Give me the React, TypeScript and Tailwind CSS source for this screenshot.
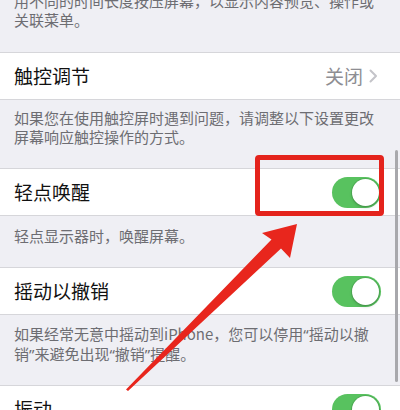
import React from "react";

const font = { fontFamily: '"Noto Sans CJK SC", "Noto Sans", sans-serif' };

// western quotes, narrow like in the screenshot
function Q({ c }: { c: string }) {
  return <span style={{ fontFamily: '"Noto Sans", sans-serif' }}>{c}</span>;
}

function Footer({ lines, className = "" }: { lines: React.ReactNode[]; className?: string }) {
  return (
    <div className={`pl-[14px] pr-[20px] text-[15px] leading-[19px] text-[#6d6d72] ${className}`}>
      {lines.map((l, i) => (
        <div key={i} className="whitespace-nowrap">
          {l}
        </div>
      ))}
    </div>
  );
}

function Toggle() {
  return (
    <div className="flex h-[31px] w-[49px] items-center justify-end rounded-full bg-[#58c25f] p-[2px]">
      <div className="h-[27px] w-[27px] rounded-full bg-white shadow-[0_0_0_1px_rgba(0,0,0,0.1),0_2px_3px_rgba(0,0,0,0.15)]" />
    </div>
  );
}

function Row({ title, children }: { title: string; children?: React.ReactNode }) {
  return (
    <div className="flex h-[48px] items-center justify-between border-y border-[#d6d6da] bg-white pl-[14px] pr-[19px]">
      <span className="text-[19px] text-[#111]">{title}</span>
      {children}
    </div>
  );
}

export default function App() {
  return (
    <div className="relative h-[410px] w-[400px] overflow-hidden bg-[#efeff4]" style={font}>
      <Footer
        className="mt-[-9px] pb-[23px]"
        lines={["用不同的时间长度按压屏幕，以显示内容预览、操作或", "关联菜单。"]}
      />
      <Row title="触控调节">
        <div className="flex items-center gap-[6px]">
          <span className="text-[19px] text-[#8e8e93]">关闭</span>
          <svg width="9" height="14" viewBox="0 0 9 14" className="mr-[3px]">
            <path d="M1.5 1.5 L7 7 L1.5 12.5" fill="none" stroke="#c4c4c9" strokeWidth="2" strokeLinecap="round" strokeLinejoin="round" />
          </svg>
        </div>
      </Row>
      <Footer
        className="pt-[8px] pb-[22px]"
        lines={["如果您在使用触控屏时遇到问题，请调整以下设置更改", "屏幕响应触控操作的方式。"]}
      />
      <Row title="轻点唤醒">
        <Toggle />
      </Row>
      <Footer className="pt-[10px] pb-[22px]" lines={["轻点显示器时，唤醒屏幕。"]} />
      <Row title="摇动以撤销">
        <Toggle />
      </Row>
      <Footer
        className="pt-[9px] pb-[21px]"
        lines={[
          <>
            如果经常无意中摇动到iPhone，您可以停用<Q c="“" />摇动以撤
          </>,
          <>
            销<Q c="”" />来避免出现<Q c="“" />撤销<Q c="”" />提醒。
          </>,
        ]}
      />
      <Row title="振动">
        <Toggle />
      </Row>

      {/* scroll indicator */}
      <div className="absolute left-[395px] top-[150px] h-[232px] w-[2.5px] rounded-full bg-[#a8a8ac]" />

      {/* red highlight box */}
      <div className="absolute left-[255px] top-[155px] h-[61px] w-[129px] rounded-[4px] border-[5px] border-[#e4231c]" />

      {/* red arrow */}
      <svg className="absolute left-0 top-0" width="400" height="410" viewBox="0 0 400 410">
        <polygon
          points="297,224 290,258 281,248.5 128,391 126,389.5 271.5,239.5 262,233"
          fill="#e8261d"
        />
      </svg>
    </div>
  );
}
